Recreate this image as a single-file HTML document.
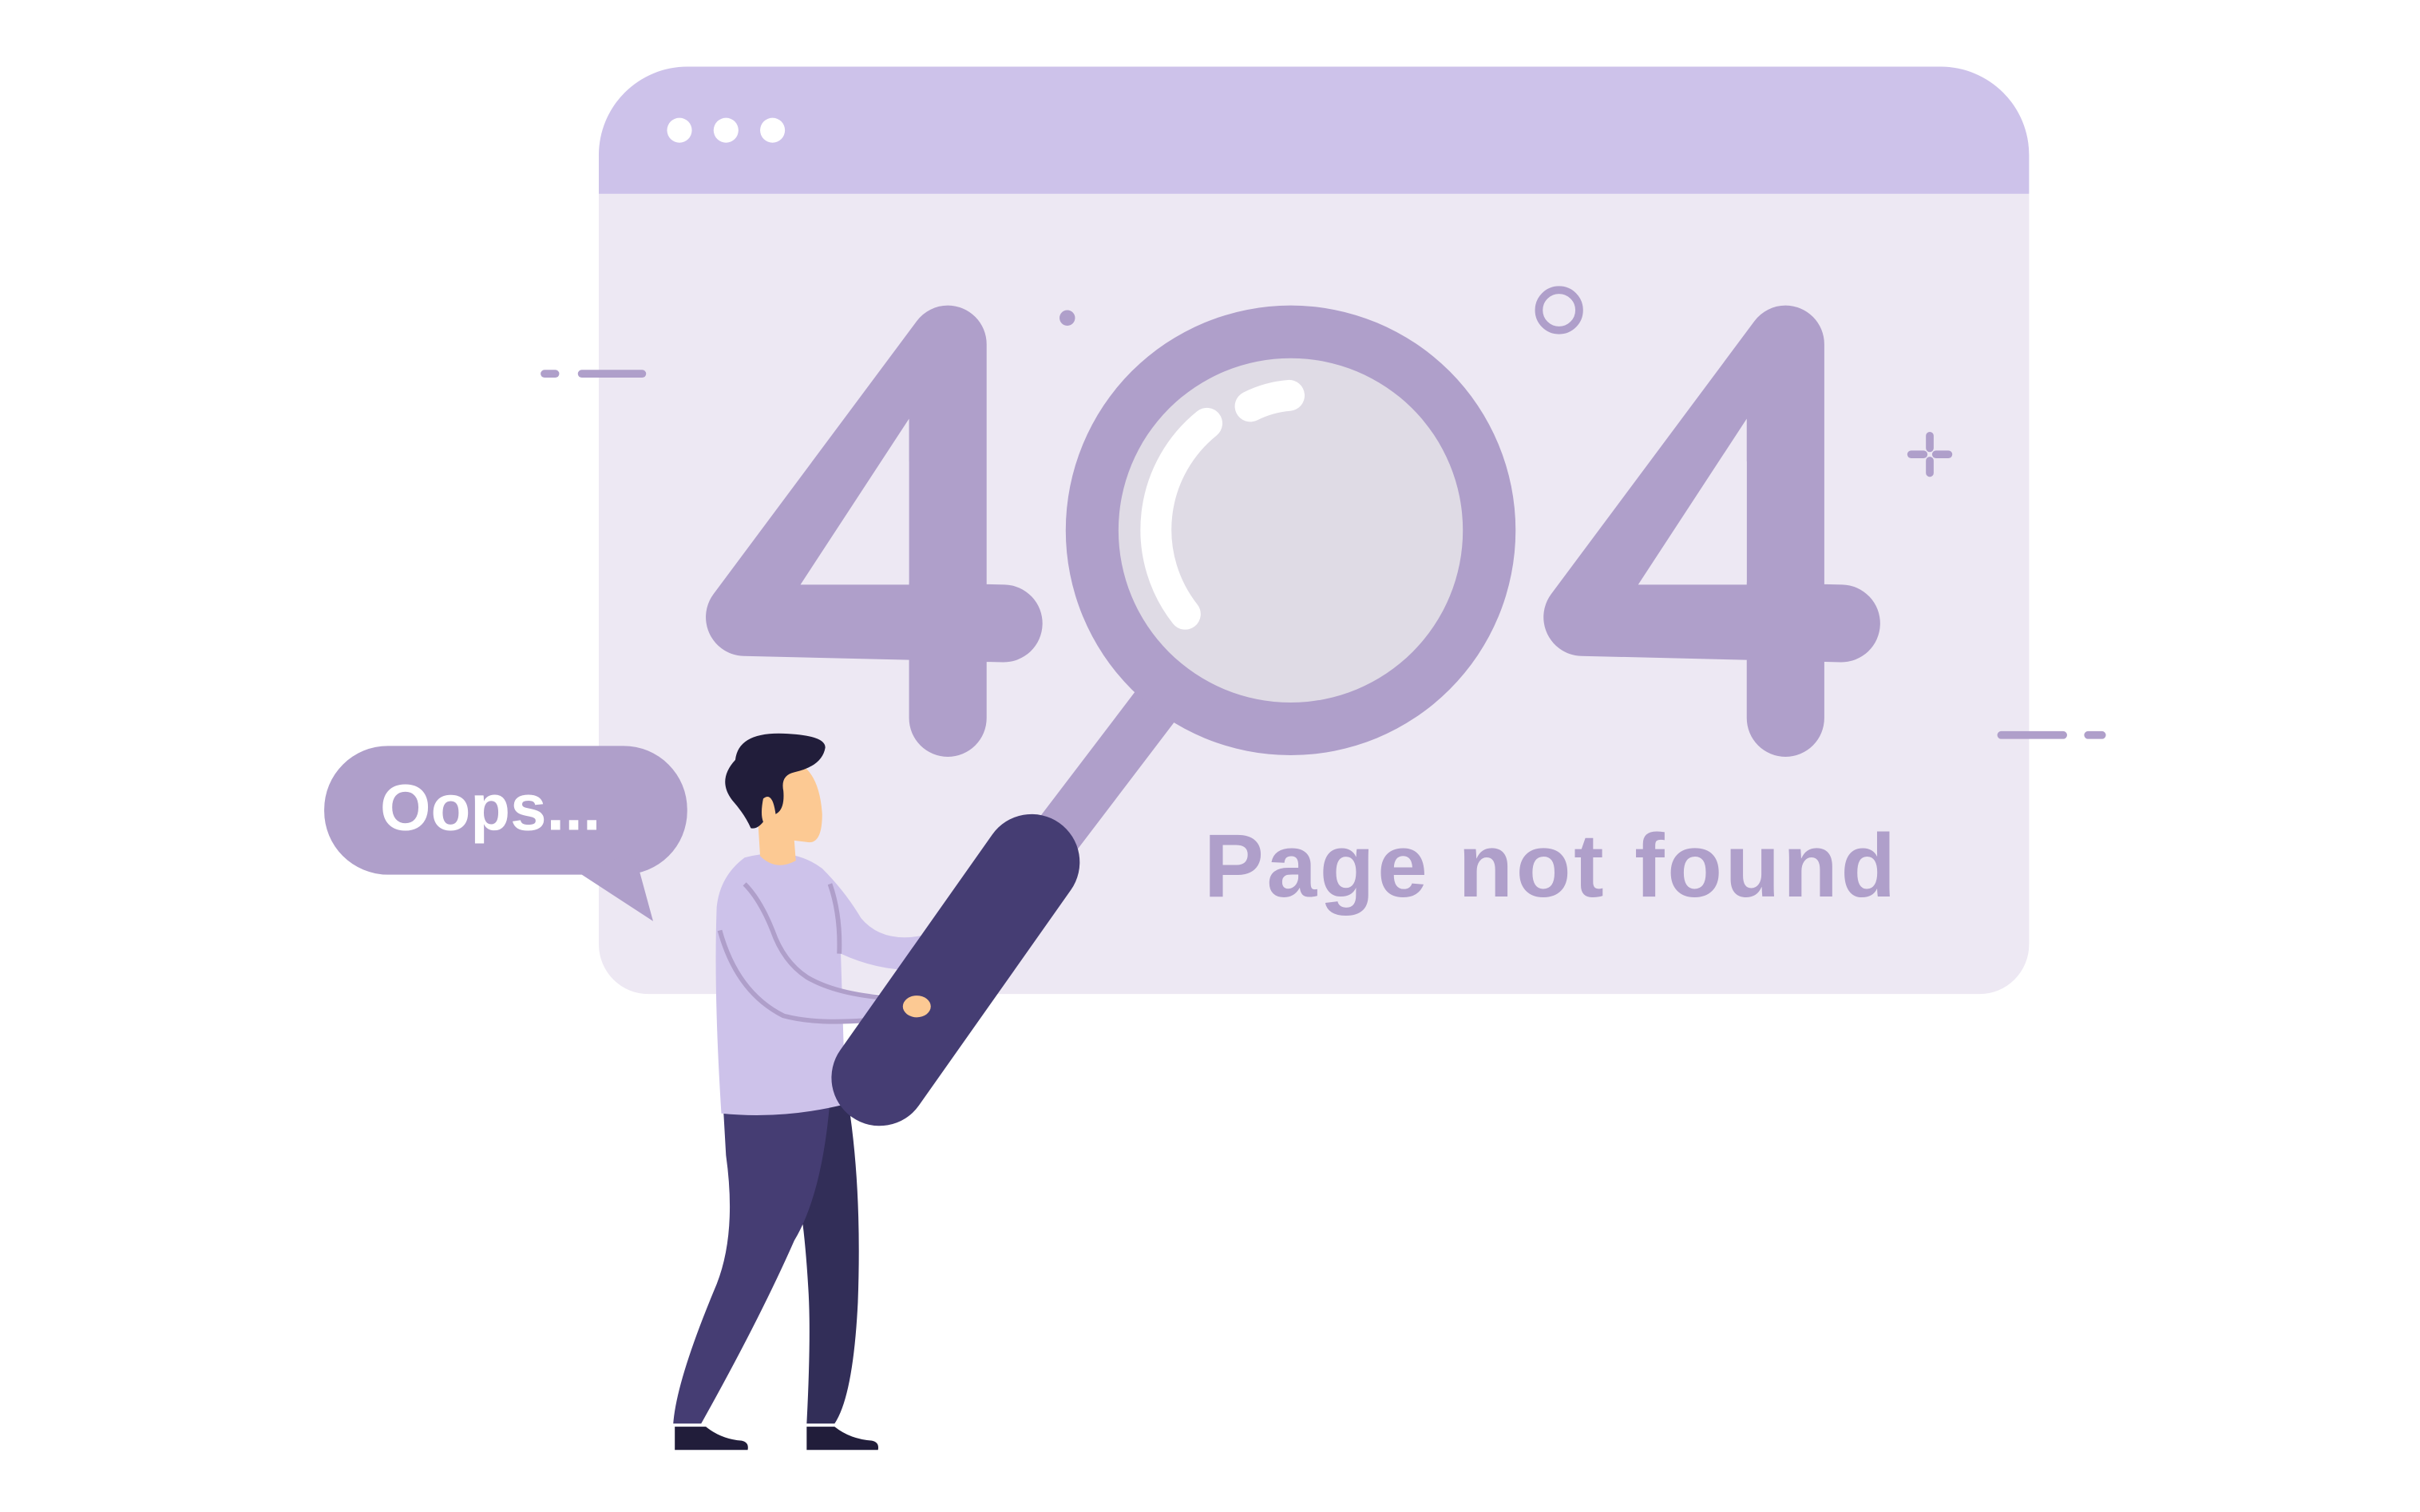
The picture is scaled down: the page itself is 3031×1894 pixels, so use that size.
<!DOCTYPE html>
<html><head><meta charset="utf-8"><style>
html,body{margin:0;padding:0;background:#fff;}
svg{display:block;width:3031px;height:1894px;}
</style></head><body>
<svg viewBox="0 0 1560 975" preserveAspectRatio="none" xmlns="http://www.w3.org/2000/svg">
<rect width="1560" height="975" fill="#fff"/>
<!-- browser window -->
<path d="M386,125 V100 A57,57 0 0 1 443,43 H1251 A57,57 0 0 1 1308,100 V125 Z" fill="#cdc2ea"/>
<path d="M386,125 H1308 V609 A32,32 0 0 1 1276,641 H418 A32,32 0 0 1 386,609 Z" fill="#ede8f3"/>
<circle cx="438" cy="84" r="8" fill="#fff"/><circle cx="468" cy="84" r="8" fill="#fff"/><circle cx="498" cy="84" r="8" fill="#fff"/>
<!-- decorations -->
<g stroke="#af9fca" stroke-width="5" stroke-linecap="round" fill="none">
<line x1="351" y1="241" x2="358" y2="241"/><line x1="375" y1="241" x2="414" y2="241"/>
<line x1="1290" y1="474" x2="1330" y2="474"/><line x1="1346" y1="474" x2="1355" y2="474"/>
<circle cx="1005" cy="200" r="13"/>
<line x1="1244" y1="281" x2="1244" y2="289"/><line x1="1244" y1="297" x2="1244" y2="305"/>
<line x1="1232" y1="293" x2="1240" y2="293"/><line x1="1248" y1="293" x2="1256" y2="293"/>
</g>
<circle cx="688" cy="205" r="5" fill="#af9fca"/>
<!-- 4s -->
<g stroke="#af9fca" stroke-width="50" stroke-linecap="round" stroke-linejoin="round" fill="none">
<polyline points="611,463 611,222 480,398 647,402"/>
<polyline points="1151,463 1151,222 1020,398 1187,402"/>
</g>
<polygon points="586,270 516,377 586,377" fill="#ede8f3"/>
<polygon points="1126,270 1056,377 1126,377" fill="#ede8f3"/>
<!-- magnifier -->
<line x1="745" y1="455" x2="675" y2="547" stroke="#af9fca" stroke-width="32"/>
<circle cx="832" cy="342" r="145" fill="#af9fca"/>
<circle cx="832" cy="342" r="111" fill="#dfdbe5"/>
<path d="M778,273 A88,88 0 0 0 764,396" stroke="#fff" stroke-width="20" fill="none" stroke-linecap="round"/>
<path d="M806,262 Q818,256 831,255" stroke="#fff" stroke-width="20" fill="none" stroke-linecap="round"/>
<text x="776" y="578" font-family="Liberation Sans, sans-serif" font-weight="bold" font-size="58" fill="#af9fca" textLength="446">Page not found</text>
<!-- bubble -->
<rect x="209" y="481" width="234" height="83" rx="41" fill="#af9fca"/>
<polygon points="372,562 421,594 409,550" fill="#af9fca"/>
<text x="245" y="535" font-family="Liberation Sans, sans-serif" font-weight="bold" font-size="42" fill="#fff">Oops...</text>
<!-- person legs -->
<path d="M517,700 L545,700 Q556,760 553,840 Q550,900 538,918 L520,918 Q523,860 521,830 Q518,780 512,760 Z" fill="#322e58"/>
<path d="M466,710 L535,710 Q530,770 512,800 Q490,850 452,918 L434,918 Q436,890 462,828 Q475,795 468,745 Z" fill="#453d73"/>
<path d="M435,920 H455 Q465,928 478,929 Q483,930 482,935 H435 Z" fill="#211d3a"/>
<path d="M520,920 H538 Q548,928 562,929 Q567,930 566,935 H520 Z" fill="#211d3a"/>
<!-- torso -->
<path d="M480,553 Q510,545 530,560 Q545,575 555,592 Q570,610 600,602 L600,625 Q570,628 542,615 L545,712 Q505,722 465,718 Q460,640 462,585 Q464,565 480,553 Z" fill="#cdc2ea"/>
<path d="M464,600 Q475,640 505,655 Q530,662 578,656 L578,644 Q540,642 520,630 Q505,620 498,600 Q490,580 480,570" fill="#cdc2ea" stroke="#af9fca" stroke-width="3"/>
<path d="M535,570 Q542,590 541,615" stroke="#af9fca" stroke-width="3" fill="none"/>
<!-- head -->
<path d="M488,520 Q490,490 510,490 Q528,495 530,525 Q530,545 520,543 L512,542 L513,555 Q500,562 490,552 Z" fill="#fcc993"/>
<path d="M474,490 Q476,472 505,473 Q532,474 532,482 Q530,494 512,498 Q503,500 505,510 Q506,522 500,525 Q498,510 492,515 Q490,525 492,530 Q488,535 484,534 Q480,525 472,516 Q462,503 474,490 Z" fill="#211d3a"/>
<!-- hand -->
<ellipse cx="591" cy="649" rx="9" ry="7" fill="#fcc993"/>
<!-- dark handle -->
<line x1="665" y1="556" x2="567" y2="695" stroke="#453d73" stroke-width="62" stroke-linecap="round"/>
<ellipse cx="591" cy="649" rx="9" ry="7" fill="#fcc993"/>
</svg>
</body></html>
